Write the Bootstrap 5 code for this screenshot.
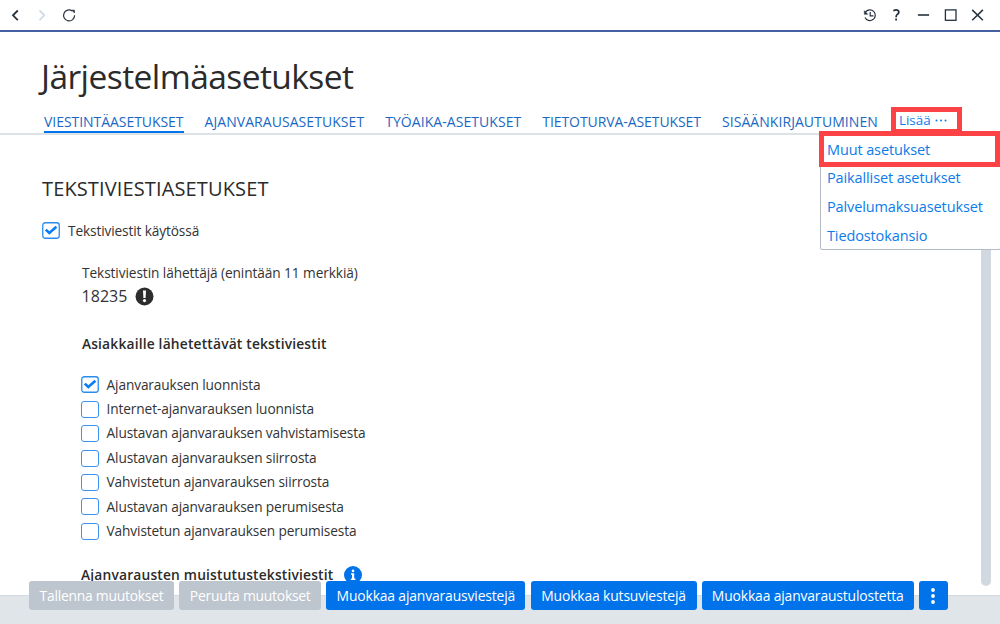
<!DOCTYPE html>
<html lang="fi">
<head>
<meta charset="utf-8">
<meta name="viewport" content="width=device-width, initial-scale=1">
<title>Järjestelmäasetukset</title>
<link rel="stylesheet" href="https://cdn.jsdelivr.net/npm/bootstrap@5.3.0/dist/css/bootstrap.min.css">
<style>
body{font-family:"Open Sans","Noto Sans",sans-serif;font-size:13.7px;letter-spacing:-.13px;color:#333;background:#fff}
.window{height:624px}
.topbar{height:32px;border-bottom:2px solid #4560a0;padding:0 14px 0 7px}
.topbar svg{display:block}
.page-title{font-size:33.5px;letter-spacing:-.56px;line-height:46px;font-weight:400;color:#2b2b2b;margin:21px 0 0 41px}
.tabs{height:36px;border-bottom:2px solid #dde2e6;padding-left:44px;gap:21px}
.tabs .nav-link{font-size:14px;letter-spacing:.06px;line-height:20px;height:21px;margin-top:13px;padding:0;color:#1b68c4;white-space:nowrap}
.tabs .nav-link.active{border-bottom:2px solid #0073ea;letter-spacing:-.05px}
.tabs .tight{letter-spacing:-.08px}
.more-tab{left:891px;top:107px;width:71px;height:27px;border:5px solid #fd4245;color:#0d7bea;background:#fff;font-size:13.4px;line-height:16px;letter-spacing:0;padding-left:3px;gap:3px;z-index:3}
.more-menu{left:820px;top:131px;width:181px;height:119px;border:1px solid #b4bbc6;border-radius:2px;background:#fff;z-index:4}
.more-menu a{display:block;height:29px;line-height:28px;padding-left:6px;font-size:14.5px;letter-spacing:-.12px;color:#0d7bea;text-decoration:none;white-space:nowrap}
.more-menu a.marked{height:36px;margin:-1px 0 -3px -2px;border:5px solid #fd4245;line-height:27px;padding-left:3px;position:relative}
.content{padding-left:42px}
.section-title{font-size:20px;letter-spacing:.13px;line-height:28px;font-weight:400;color:#2b2b2b;margin:40px 0 0}
.tick-row{gap:8px;height:24.4px}
.tick{width:18px;height:17px;border:1.5px solid #3a93f0;border-radius:3px}
.indent{padding-left:38.6px}
.sub-title{font-size:13.8px;letter-spacing:.18px;font-weight:600;line-height:20px;color:#2b2b2b}
.track{right:9px;top:134px;width:10px;height:452px;border-radius:5px;background:#d2d8e0}
.bottom-bar{height:29px;background:#e0e5e9;border-top:1px solid #d3d9e0;padding-left:29px;gap:5.2px}
.bottom-bar .btn{position:relative;margin-top:-15px;height:29px;padding:0;font-size:13.9px;letter-spacing:-.15px;line-height:28px;border:0;border-radius:3px;background:#0073ea;color:#fff;white-space:nowrap}
.bottom-bar .btn:disabled{background:#bdc5ce;color:#fff;opacity:1;letter-spacing:-.25px}
.w-save{width:145px}.w-undo{width:142px}.w-appt{width:199px}.w-call{width:166px}.w-print{width:212px}.w-dots{width:29px}
</style>
</head>
<body>
<div class="window position-relative overflow-hidden d-flex flex-column">
  <header class="topbar d-flex align-items-center justify-content-between flex-shrink-0">
    <div class="d-flex" style="gap:11px">
      <svg width="16" height="16" fill="none" stroke="#26323e" stroke-width="1.8"><path d="M10.8 3.5 6 8.3l4.8 4.8"/></svg>
      <svg width="16" height="16" fill="none" stroke="#cfdbe9" stroke-width="1.8"><path d="M5.5 3.5l4.8 4.8-4.8 4.8"/></svg>
      <svg width="16" height="16" fill="none" stroke="#26323e" stroke-width="1.2"><path d="M13.6 8.3A5.5 5.5 0 1 1 11.2 3.9"/><path d="M10.8 3.2h2.6v2.6z" fill="#26323e" stroke-width=".8"/></svg>
    </div>
    <div class="d-flex" style="gap:11px">
      <svg width="16" height="16" fill="none" stroke="#26323e" stroke-width="1.2"><path d="M3.4 5.2A5.4 5.4 0 1 1 3 10.5M8.2 5v3.8h3.3"/><path d="M2.3 3.7v3.6h3.5z" fill="#26323e" stroke-width=".5"/></svg>
      <svg width="16" height="16" fill="none" stroke="#26323e" stroke-width="1.8"><path d="M4.4 3.8Q7.2 2.3 9.1 3.5c1.6 1.4.4 3-.8 3.9Q7.1 8.3 7.1 10.2"/><path d="M7.1 11.6v2"/></svg>
      <svg width="16" height="16" stroke="#26323e" stroke-width="1.6"><path d="M1.9 8h11.2"/></svg>
      <svg width="16" height="16" fill="none" stroke="#26323e" stroke-width="1.3"><rect x="2.4" y="2.9" width="10.6" height="10.4"/></svg>
      <svg width="16" height="16" stroke="#26323e" stroke-width="1.5"><path d="M2.2 2.9 12.9 13.3M12.9 2.9 2.2 13.3"/></svg>
    </div>
  </header>

  <h1 class="page-title">Järjestelmäasetukset</h1>
  <nav class="tabs nav flex-nowrap flex-shrink-0">
    <a class="nav-link active" href="#">VIESTINTÄASETUKSET</a>
    <a class="nav-link" href="#">AJANVARAUSASETUKSET</a>
    <a class="nav-link" href="#">TYÖAIKA-ASETUKSET</a>
    <a class="nav-link tight" href="#">TIETOTURVA-ASETUKSET</a>
    <a class="nav-link" href="#">SISÄÄNKIRJAUTUMINEN</a>
  </nav>
  <div class="more-tab position-absolute d-flex">Lisää <svg width="16" height="16" fill="#0d7bea"><circle cx="2.5" cy="8.5" r="1"/><circle cx="7" cy="8.5" r="1"/><circle cx="11.5" cy="8.5" r="1"/></svg></div>
  <div class="more-menu position-absolute">
    <a class="marked" href="#">Muut asetukset</a>
    <a href="#">Paikalliset asetukset</a>
    <a href="#">Palvelumaksuasetukset</a>
    <a href="#">Tiedostokansio</a>
  </div>
  <div class="track position-absolute"></div>

  <main class="content flex-grow-1 overflow-hidden">
    <h2 class="section-title">TEKSTIVIESTIASETUKSET</h2>
    <div class="tick-row d-flex align-items-center" style="margin-top:16px"><svg width="18" height="18" fill="none" stroke="#2b8cf0"><rect x=".75" y=".75" width="16.5" height="15.5" rx="2.5" stroke-width="1.3"/><path d="M3.8 7.6 7.3 11 14.4 4.8" stroke="#0a7cf5" stroke-width="2.6"/></svg>Tekstiviestit käytössä</div>
    <div class="indent">
      <div style="margin-top:20px;padding-left:1.4px;line-height:20px;letter-spacing:-.09px">Tekstiviestin lähettäjä (enintään 11 merkkiä)</div>
      <div class="d-flex align-items-center" style="gap:8px;padding-left:1px;height:26px;font-size:16px;letter-spacing:0">18235
        <svg width="19" height="19"><circle cx="9.5" cy="9.5" r="9" fill="#2d2d2d"/><path d="M8 3.6h3l-.4 7.4H8.4z" fill="#fff"/><circle cx="9.5" cy="13.6" r="1.6" fill="#fff"/></svg></div>
      <div class="sub-title" style="margin:25px 0 18.4px;padding-left:1.3px">Asiakkaille lähetettävät tekstiviestit</div>
      <div class="tick-row d-flex align-items-center"><svg width="18" height="18" fill="none" stroke="#2b8cf0"><rect x=".75" y=".75" width="16.5" height="15.5" rx="2.5" stroke-width="1.3"/><path d="M3.8 7.6 7.3 11 14.4 4.8" stroke="#0a7cf5" stroke-width="2.6"/></svg>Ajanvarauksen luonnista</div>
      <div class="tick-row d-flex align-items-center"><span class="tick"></span>Internet-ajanvarauksen luonnista</div>
      <div class="tick-row d-flex align-items-center"><span class="tick"></span>Alustavan ajanvarauksen vahvistamisesta</div>
      <div class="tick-row d-flex align-items-center"><span class="tick"></span>Alustavan ajanvarauksen siirrosta</div>
      <div class="tick-row d-flex align-items-center"><span class="tick"></span>Vahvistetun ajanvarauksen siirrosta</div>
      <div class="tick-row d-flex align-items-center"><span class="tick"></span>Alustavan ajanvarauksen perumisesta</div>
      <div class="tick-row d-flex align-items-center"><span class="tick"></span>Vahvistetun ajanvarauksen perumisesta</div>
      <div class="sub-title d-flex align-items-center" style="gap:11px;padding-left:.4px;margin-top:21.6px;height:20px">Ajanvarausten muistutustekstiviestit
        <svg width="18" height="18"><circle cx="9" cy="9" r="9" fill="#0073ea"/><circle cx="9" cy="4.9" r="1.3" fill="#fff"/><path d="M7 7.2h3.2v5.3h1.2V14H6.8v-1.5H8V8.7H7z" fill="#fff"/></svg></div>
    </div>
  </main>

  <footer class="bottom-bar d-flex flex-shrink-0">
    <button class="btn w-save" disabled>Tallenna muutokset</button>
    <button class="btn w-undo" disabled>Peruuta muutokset</button>
    <button class="btn w-appt">Muokkaa ajanvarausviestejä</button>
    <button class="btn w-call">Muokkaa kutsuviestejä</button>
    <button class="btn w-print">Muokkaa ajanvaraustulostetta</button>
    <button class="btn w-dots d-flex justify-content-center align-items-center" aria-label="Lisää toimintoja"><svg width="6" height="18" fill="#fff"><circle cx="3" cy="3" r="1.9"/><circle cx="3" cy="9" r="1.9"/><circle cx="3" cy="15" r="1.9"/></svg></button>
  </footer>
</div>
<script src="https://cdn.jsdelivr.net/npm/bootstrap@5.3.0/dist/js/bootstrap.bundle.min.js"></script>
</body>
</html>
